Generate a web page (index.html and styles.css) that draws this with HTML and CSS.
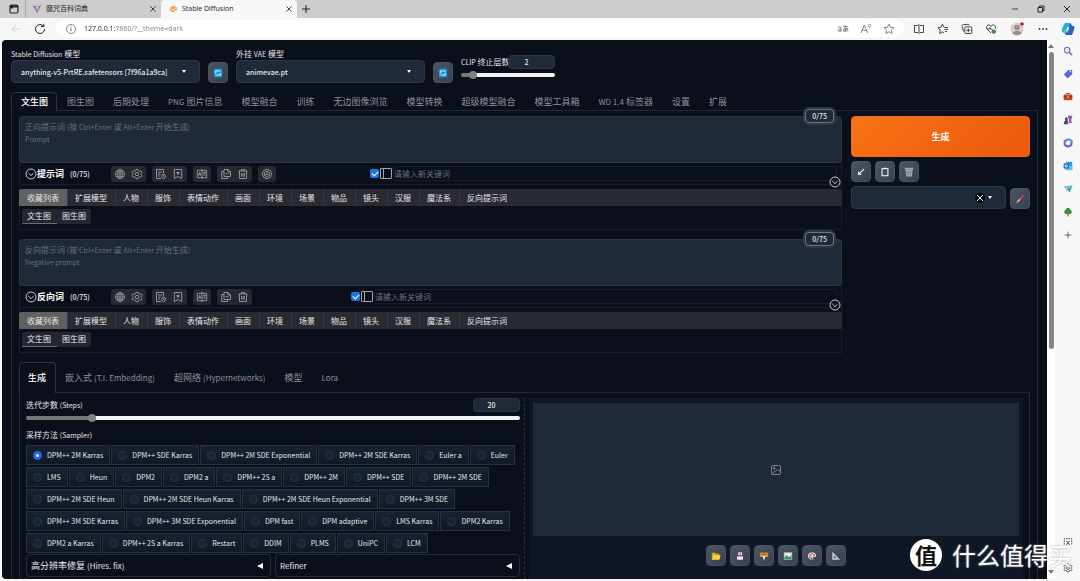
FILE: index.html
```html
<!DOCTYPE html>
<html lang="zh-CN">
<head>
<meta charset="utf-8">
<title>Stable Diffusion</title>
<link rel="stylesheet" href="styles.css">
</head>
<body>
<svg class="defs" aria-hidden="true">
  <symbol id="refresh" viewBox="0 0 12 12"><rect x="1" y="1" width="10" height="10" rx="1" fill="#1c9be0"/><path d="M3.2 5.6V3.4h4.2a1.3 1.3 0 0 1 1.3 1.3M2.2 4.6l1 1 1-1M8.8 6.4v2.2H4.600a1.300 1.300 0 0 1-1.300-1.300M9.800 7.400l-1-1-1 1" fill="none" stroke="#e8f6ff" stroke-width="1"/></symbol>
  <symbol id="chev" viewBox="0 0 12 12"><circle cx="6" cy="6" r="5" fill="none" stroke="#c8cacf" stroke-width="1"/><path d="M3.300 5l2.700 2.600L8.700 5" fill="none" stroke="#c8cacf" stroke-width="1"/></symbol>
  <symbol id="globe" viewBox="0 0 12 12"><g fill="none" stroke="currentColor" stroke-width=".8"><circle cx="6" cy="6" r="4.500"/><ellipse cx="6" cy="6" rx="2.200" ry="4.500"/><path d="M1.500 6h9M2.200 3.700h7.600M2.200 8.300h7.600M6 1.500v9"/></g></symbol>
  <symbol id="gear" viewBox="0 0 12 12"><g fill="none" stroke="currentColor" stroke-width=".9"><path d="M5 1.300h2l.4 1.300 1.200.6 1.300-.4 1 1.700-.9 1v1l.9 1-1 1.700-1.300-.4-1.200.6-.4 1.300H5l-.4-1.300-1.200-.6-1.300.4-1-1.700.9-1v-1l-.9-1 1-1.700 1.300.4 1.200-.6z"/><circle cx="6" cy="6" r="1.700"/></g></symbol>
  <symbol id="history" viewBox="0 0 12 12"><g fill="none" stroke="currentColor" stroke-width=".9"><path d="M6 10.500H1.500v-9h7v4M3 4h4M3 6h2.500M3 8h2"/><circle cx="8.600" cy="8.400" r="2.100"/><path d="M8.600 7.200v1.300h1"/></g></symbol>
  <symbol id="bookmark" viewBox="0 0 12 12"><g fill="none" stroke="currentColor" stroke-width=".9"><path d="M2.300 1.500h7.400v9L6 8.500l-3.700 2z"/></g><path d="M6 2.900l.6 1.300 1.400.2-1 1 .2 1.400L6 6.100l-1.200.7L5 5.400l-1-1 1.400-.2z" fill="currentColor"/></symbol>
  <symbol id="translate" viewBox="0 0 12 12"><g fill="none" stroke="currentColor" stroke-width=".9"><path d="M1.300 2.300h9.400v7.400H1.300zM6 1v10M2.600 7.700l1.100-3.500 1.100 3.500M3 6.600h1.500M7.200 4.500h2.600M8.500 3.700v.8M7.400 7.800l2-3M7.600 5.800l2 2"/></g></symbol>
  <symbol id="copy" viewBox="0 0 12 12"><g fill="none" stroke="currentColor" stroke-width=".9"><path d="M4 1.500h4l2.500 2.200v4.800H4zM7.800 1.500v2.400h2.500M4 3.500H1.700v7h6v-2M5.500 5.700h3.300"/></g></symbol>
  <symbol id="trash" viewBox="0 0 12 12"><path d="M1.500 3h9M4.300 3V1.500h3.400V3M2.500 3v7.500h7V3M4.700 5v3.700M6 5v3.700M7.300 5v3.700" fill="none" stroke="currentColor" stroke-width=".9"/></symbol>
  <symbol id="ai" viewBox="0 0 12 12"><g fill="none" stroke="currentColor" stroke-width=".9"><path d="M6 1.200l3.400 1.400L10.800 6 9.400 9.400 6 10.800 2.600 9.400 1.200 6l1.400-3.400z"/><path d="M6 3l2.600 1.500v3L6 9 3.400 7.500v-3zM6 3v3l2.600 1.500M6 6L3.400 7.500"/></g></symbol>
  <symbol id="cross" viewBox="0 0 12 12"><path d="M3 3l6 6M9 3L3 9" fill="none" stroke="currentColor" stroke-width="1"/></symbol>
</svg>

<div class="browser">
  <header class="tabstrip">
    <button class="chromebtn tabmenu" aria-label="标签页菜单"><svg viewBox="0 0 12 12"><rect x="2" y="2" width="8" height="8" rx="1.500" fill="none" stroke="#222" stroke-width="1.200"/><path d="M2 3.500h8M4 2v3.500" stroke="#222" stroke-width="1.800"/></svg></button>
    <div class="btab">
      <svg viewBox="0 0 12 12"><path d="M.8 1.500l5.200 9.500 5.200-9.500L6 3z" fill="#7a6df0"/><path d="M6.500 .8L4 5.500h2L5.500 9.500 8.500 4H7z" fill="#f6c52c"/></svg>
      <span>魔咒百科词典</span>
      <button class="chromebtn" aria-label="关闭"><svg viewBox="0 0 12 12"><use href="#cross"/></svg></button>
    </div>
    <div class="btab current">
      <svg viewBox="0 0 12 12"><path d="M2 4.500L6.500 2 10.500 4v4L5.500 10 2 8z" fill="#f6a04c"/><path d="M2 5l4 2 4-2.500M3 8l3-1 4 1" fill="none" stroke="#fbdcb8" stroke-width="1"/></svg>
      <span>Stable Diffusion</span>
      <button class="chromebtn" aria-label="关闭"><svg viewBox="0 0 12 12"><use href="#cross"/></svg></button>
    </div>
    <button class="chromebtn" aria-label="新建标签页"><svg viewBox="0 0 12 12"><path d="M6 2v8M2 6h8" stroke="#222" stroke-width="1"/></svg></button>
    <div class="winctl">
      <button class="chromebtn" aria-label="最小化"><svg viewBox="0 0 12 12"><path d="M3 6h6" stroke="#444"/></svg></button>
      <button class="chromebtn" aria-label="还原"><svg viewBox="0 0 12 12"><path d="M3 4.500h4.500V9H3zM4.500 4.500V3H9v4.500H7.500" fill="none" stroke="#222"/></svg></button>
      <button class="chromebtn" aria-label="关闭窗口"><svg viewBox="0 0 12 12"><use href="#cross"/></svg></button>
    </div>
  </header>

  <nav class="toolbar">
    <button class="chromebtn" aria-label="后退"><svg viewBox="0 0 12 12"><path d="M10 6H2M5.500 2.500L2 6l3.500 3.500" fill="none" stroke="#d0d0d0"/></svg></button>
    <button class="chromebtn" aria-label="刷新"><svg viewBox="0 0 12 12"><path d="M10.500 6A4.500 4.500 0 1 1 9 2.700M9.800.8v2.700H7" fill="none" stroke="#222" stroke-width="1"/></svg></button>
    <div class="address">
      <svg viewBox="0 0 12 12"><circle cx="6" cy="6" r="4.500" fill="none" stroke="#777" stroke-width=".9"/><path d="M6 5.200v3M6 3.300v1" stroke="#777"/></svg>
      <input type="text" class="url" aria-label="地址" value="127.0.0.1:7860/?__theme=dark">
      <button class="chromebtn" aria-label="翻译"><svg viewBox="0 0 12 12" fill="none" stroke="#777" stroke-width=".9"><path d="M1 4.500q2-1.500 3 0v4M4 6.200q-3-.4-3 1.200t3 .6M6 3.600h5M8 2.500q-.5 4 .8 6M10 5q-1 4-3.300 3.500Q5.300 6 9 5.400 11.500 5.600 10.800 7.500 10 8.700 9.500 8.500"/></svg></button>
      <button class="chromebtn" aria-label="朗读"><svg viewBox="0 0 12 12" fill="none" stroke="#777" stroke-width=".9"><path d="M1 10l3.300-8 3.300 8M2.200 7.300h4.200M8 1.500q1 1 0 2.300M9.500.8q1.700 1.800 0 4"/></svg></button>
      <button class="chromebtn" aria-label="收藏"><svg viewBox="0 0 12 12"><path d="M6 1.200l1.500 3.100 3.400.4-2.500 2.400.6 3.400-3-1.700-3 1.700.6-3.400L1.100 4.700l3.400-.4z" fill="none" stroke="#777" stroke-width=".9"/></svg></button>
    </div>
    <div class="tools">
      <button class="chromebtn" aria-label="分屏"><svg viewBox="0 0 12 12" fill="none" stroke="#333" stroke-width=".9"><path d="M5 2.500H1.500v7H5M7 2.500h3.500v7H7M6 1v10"/></svg></button>
      <button class="chromebtn" aria-label="收藏夹"><svg viewBox="0 0 12 12" fill="none" stroke="#333" stroke-width=".9"><path d="M7 4.300L5.500 1.200 4 4.300l-3 .4 2.300 2.400-.6 3.400 2.800-1.600L7 9.700M7.500 4.500H11M7.500 6.500H11M8 8.500h2"/></svg></button>
      <button class="chromebtn" aria-label="集锦"><svg viewBox="0 0 12 12" fill="none" stroke="#333" stroke-width=".9"><rect x="3.800" y="3.800" width="7" height="6.700" rx="1"/><path d="M2.500 8.500L1.200 3.300Q1 2 2.300 1.700L7 1.300q1 0 1.200 1.200M7.300 5.300v4M5.300 7.200h4"/></svg></button>
      <button class="chromebtn" aria-label="性能"><svg viewBox="0 0 12 12" fill="none" stroke="#333" stroke-width=".9"><path d="M6 10L1.700 5.700Q.6 3 3 2q2-.4 3 1.300Q7 1.600 9 2q2.400 1 1.300 3.700M2 6h2l1-1.500L6.500 7l1-1"/><circle cx="8.800" cy="8.600" r="2.200" fill="#3e8e3c" stroke="none"/></svg></button>
      <button class="chromebtn avatar profile" aria-label="个人资料"><svg viewBox="0 0 14 14"><circle cx="7" cy="7" r="6.500" fill="#d5cec9"/><circle cx="7" cy="5.500" r="2.700" fill="#968f8b"/><path d="M2.500 11.500q0-2.500 4.500-2.500t4.500 2.500Q7 15 2.500 11.500z" fill="#968f8b"/><circle cx="12" cy="2" r="1.800" fill="#c4152b"/></svg></button>
      <button class="chromebtn" aria-label="更多"><svg viewBox="0 0 12 12"><g fill="#333"><circle cx="2.500" cy="6" r=".9"/><circle cx="6" cy="6" r=".9"/><circle cx="9.500" cy="6" r=".9"/></g></svg></button>
      <button class="chromebtn avatar" aria-label="Copilot"><svg viewBox="0 0 14 14"><path d="M4 1h5l2 3-3 1-2 6H3Q0 10 1 6.500z" fill="#23a9dc"/><path d="M9 1l2.500 3H13q1 1 0 3.500L11 13H5l-1.500-2H6l2-6z" fill="#2562cf"/><path d="M3 11l3-1 1-3-3 1-1.500 1z" fill="#6cd35c"/><path d="M6.500 5h1.800L7 9H5.200z" fill="#f7f7f7"/></svg></button>
    </div>
  </nav>

  <div class="content">
    <main class="page">
      <section class="quick">
        <div class="field">
          <label for="ckpt"><small>Stable Diffusion</small> 模型</label>
          <div class="selectwrap"><select id="ckpt"><option>anything-v5-PrtRE.safetensors [7f96a1a9ca]</option></select></div>
        </div>
        <button class="tool" aria-label="刷新模型"><svg viewBox="0 0 12 12"><use href="#refresh"/></svg></button>
        <div class="field">
          <label for="vae">外挂 <small>VAE</small> 模型</label>
          <div class="selectwrap"><select id="vae"><option>animevae.pt</option></select></div>
        </div>
        <button class="tool" aria-label="刷新 VAE"><svg viewBox="0 0 12 12"><use href="#refresh"/></svg></button>
        <div class="clip">
          <div class="sliderhead"><label for="clip"><small>CLIP</small> 终止层数</label><input class="num" type="text" value="2" aria-label="CLIP 终止层数数值"></div>
          <input id="clip" class="slider" type="range" min="1" max="12" value="2">
        </div>
      </section>

      <nav class="tabs">
        <button class="tab on">文生图</button><button class="tab">图生图</button><button class="tab">后期处理</button><button class="tab"><small>PNG</small> 图片信息</button><button class="tab">模型融合</button><button class="tab">训练</button><button class="tab">无边图像浏览</button><button class="tab">模型转换</button><button class="tab">超级模型融合</button><button class="tab">模型工具箱</button><button class="tab"><small>WD 1.4</small> 标签器</button><button class="tab">设置</button><button class="tab">扩展</button>
      </nav>

      <section class="panel">
        <div class="top">
          <div class="prompts">
            <div class="prompt">
              <textarea id="pos" placeholder=" "></textarea>
              <label class="hint" for="pos">正向提示词 <small>(</small>按 <small>Ctrl+Enter</small> 或 <small>Alt+Enter</small> 开始生成<small>)<br>Prompt</small></label>
              <span class="counter">0/75</span>
              <div class="ptools">
                <svg class="fold" viewBox="0 0 12 12"><use href="#chev"/></svg><strong>提示词</strong><span class="count">(0/75)</span>
                <div class="groups">
                  <div class="group"><button aria-label="语言"><svg><use href="#globe"/></svg></button><button aria-label="设置"><svg><use href="#gear"/></svg></button></div>
                  <div class="group"><button aria-label="历史"><svg><use href="#history"/></svg></button><button aria-label="收藏"><svg><use href="#bookmark"/></svg></button></div>
                  <div class="group"><button aria-label="翻译"><svg><use href="#translate"/></svg></button></div>
                  <div class="group"><button aria-label="复制"><svg><use href="#copy"/></svg></button><button aria-label="清空"><svg><use href="#trash"/></svg></button></div>
                  <div class="group"><button aria-label="AI"><svg><use href="#ai"/></svg></button></div>
                </div>
                <div class="keyword"><input type="checkbox" checked aria-label="启用关键词"><i class="pane"></i><input type="text" placeholder="请输入新关键词" aria-label="新关键词"></div>
              </div>
              <svg class="unfold" viewBox="0 0 12 12"><use href="#chev"/></svg>
              <div class="cats"><button class="on">收藏列表</button><button>扩展模型</button><button>人物</button><button>服饰</button><button>表情动作</button><button>画面</button><button>环境</button><button>场景</button><button>物品</button><button>镜头</button><button>汉服</button><button>魔法系</button><button>反向提示词</button></div>
              <div class="subs"><button class="on">文生图</button><button>图生图</button></div>
            </div>
            <div class="prompt">
              <textarea id="neg" placeholder=" "></textarea>
              <label class="hint" for="neg">反向提示词 <small>(</small>按 <small>Ctrl+Enter</small> 或 <small>Alt+Enter</small> 开始生成<small>)<br>Negative prompt</small></label>
              <span class="counter">0/75</span>
              <div class="ptools">
                <svg class="fold" viewBox="0 0 12 12"><use href="#chev"/></svg><strong>反向词</strong><span class="count">(0/75)</span>
                <div class="groups">
                  <div class="group"><button aria-label="语言"><svg><use href="#globe"/></svg></button><button aria-label="设置"><svg><use href="#gear"/></svg></button></div>
                  <div class="group"><button aria-label="历史"><svg><use href="#history"/></svg></button><button aria-label="收藏"><svg><use href="#bookmark"/></svg></button></div>
                  <div class="group"><button aria-label="翻译"><svg><use href="#translate"/></svg></button></div>
                  <div class="group"><button aria-label="复制"><svg><use href="#copy"/></svg></button><button aria-label="清空"><svg><use href="#trash"/></svg></button></div>
                </div>
                <div class="keyword wide"><input type="checkbox" checked aria-label="启用关键词"><i class="pane"></i><input type="text" placeholder="请输入新关键词" aria-label="新关键词"></div>
              </div>
              <svg class="unfold" viewBox="0 0 12 12"><use href="#chev"/></svg>
              <div class="cats"><button class="on">收藏列表</button><button>扩展模型</button><button>人物</button><button>服饰</button><button>表情动作</button><button>画面</button><button>环境</button><button>场景</button><button>物品</button><button>镜头</button><button>汉服</button><button>魔法系</button><button>反向提示词</button></div>
              <div class="subs"><button class="on">文生图</button><button>图生图</button></div>
            </div>
          </div>

          <aside class="actions">
            <button class="generate">生成</button>
            <div class="toolrow">
              <button class="tool" aria-label="读取参数"><svg viewBox="0 0 12 12"><path d="M9.500 2.500L4 8" fill="none" stroke="#fff" stroke-width="1.300"/><path d="M2.500 5v4.500H7z" fill="#fff"/></svg></button>
              <button class="tool" aria-label="粘贴"><svg viewBox="0 0 12 12"><rect x="2.500" y="2" width="7" height="8.500" fill="none" stroke="#fff" stroke-width="1.200"/><path d="M4.500 1.500h3" stroke="#fff" stroke-width="1.500"/></svg></button>
              <button class="tool" aria-label="清除提示词"><svg viewBox="0 0 12 12"><path d="M1 1h10v2h-.7L9.500 11.500h-7L1.700 3H1z" fill="#a5a8ad"/><path d="M1.500 3h9M4 4.500l.5 5.500M6 4.500V10M8 4.500L7.500 10M3 6.500h6" stroke="#70757d" stroke-width=".6"/></svg></button>
            </div>
            <div class="stylerow">
              <div class="selectwrap styles"><select aria-label="预设样式"><option></option></select><button class="clear" aria-label="清除"><svg viewBox="0 0 12 12"><use href="#cross"/></svg></button></div>
              <button class="tool" aria-label="编辑样式"><svg viewBox="0 0 12 12"><path d="M10.800 1.200L5 6l1 1.200z" fill="#e2395b" stroke="#e2395b" stroke-width="1.200"/><path d="M5 5.800l1.500 1.500-1 1-1.500-1.500z" fill="#c9ccd1"/><path d="M4.300 6.800l1.200 1.200Q4.500 10.800 1.200 10.500 2.500 9.700 2.600 8.500q.5-1.600 1.700-1.700z" fill="#f3b04b"/></svg></button>
            </div>
          </aside>
        </div>

        <nav class="tabs sub">
          <button class="tab on">生成</button><button class="tab">嵌入式 <small>(T.I. Embedding)</small></button><button class="tab">超网络 <small>(Hypernetworks)</small></button><button class="tab">模型</button><button class="tab"><small>Lora</small></button>
        </nav>
        <div class="panel lower">
          <section class="settings">
            <div class="sliderhead"><label for="steps">迭代步数 <small>(Steps)</small></label><input class="num" type="text" value="20" aria-label="迭代步数数值"></div>
            <input id="steps" class="slider" type="range" min="1" max="150" value="20">
            <fieldset class="samplers">
              <legend>采样方法 <small>(Sampler)</small></legend>
              <div class="row"><label><input type="radio" name="s" checked>DPM++ 2M Karras</label><label><input type="radio" name="s">DPM++ SDE Karras</label><label><input type="radio" name="s">DPM++ 2M SDE Exponential</label><label><input type="radio" name="s">DPM++ 2M SDE Karras</label><label><input type="radio" name="s">Euler a</label><label><input type="radio" name="s">Euler</label></div>
              <div class="row"><label><input type="radio" name="s">LMS</label><label><input type="radio" name="s">Heun</label><label><input type="radio" name="s">DPM2</label><label><input type="radio" name="s">DPM2 a</label><label><input type="radio" name="s">DPM++ 2S a</label><label><input type="radio" name="s">DPM++ 2M</label><label><input type="radio" name="s">DPM++ SDE</label><label><input type="radio" name="s">DPM++ 2M SDE</label></div>
              <div class="row"><label><input type="radio" name="s">DPM++ 2M SDE Heun</label><label><input type="radio" name="s">DPM++ 2M SDE Heun Karras</label><label><input type="radio" name="s">DPM++ 2M SDE Heun Exponential</label><label><input type="radio" name="s">DPM++ 3M SDE</label></div>
              <div class="row"><label><input type="radio" name="s">DPM++ 3M SDE Karras</label><label><input type="radio" name="s">DPM++ 3M SDE Exponential</label><label><input type="radio" name="s">DPM fast</label><label><input type="radio" name="s">DPM adaptive</label><label><input type="radio" name="s">LMS Karras</label><label><input type="radio" name="s">DPM2 Karras</label></div>
              <div class="row"><label><input type="radio" name="s">DPM2 a Karras</label><label><input type="radio" name="s">DPM++ 2S a Karras</label><label><input type="radio" name="s">Restart</label><label><input type="radio" name="s">DDIM</label><label><input type="radio" name="s">PLMS</label><label><input type="radio" name="s">UniPC</label><label><input type="radio" name="s">LCM</label></div>
            </fieldset>
            <div class="accordions">
              <button><span>高分辨率修复 <small>(Hires. fix)</small></span><i></i></button>
              <button><small>Refiner</small><i></i></button>
            </div>
          </section>
          <section class="result">
            <div class="preview"><svg viewBox="0 0 12 12" fill="none" stroke="#858c97" stroke-width=".9"><rect x="1.500" y="1.500" width="9" height="9" rx="1"/><circle cx="4.200" cy="4.200" r=".9"/><path d="M2 10l5.500-4.500 3 2.500"/></svg></div>
            <div class="toolrow">
              <button class="tool" aria-label="打开目录"><svg viewBox="0 0 12 12"><path d="M1 2h4l1 1.200h4V10H1z" fill="#d9a21c"/><path d="M3 5h8.500L10 10.500H1z" fill="#fdd044"/></svg></button>
              <button class="tool" aria-label="保存"><svg viewBox="0 0 12 12"><path d="M1.500 1.500h8l1 1v8h-9z" fill="#5a4170"/><path d="M4 1.500h4.500V5H4z" fill="#e6e6ee"/><path d="M2.500 6.500h7v4h-7z" fill="#f2eef5"/><path d="M6.500 2v2.300" stroke="#5a4170"/></svg></button>
              <button class="tool" aria-label="打包保存"><svg viewBox="0 0 12 12"><path d="M1 2h10v5H1z" fill="#eaa13a"/><path d="M1 4h10M6 2v3" stroke="#8c5527"/><path d="M6 6v4" stroke="#dcd9ee" stroke-width="2.400"/><path d="M4.800 9.500h2.400V11H4.800z" fill="#7662ca"/></svg></button>
              <button class="tool" aria-label="发送到图生图"><svg viewBox="0 0 12 12"><path d="M1 1.500h10v9H1z" fill="#c9b98e"/><path d="M2 2.500h8v7H2z" fill="#d6f0e4"/><path d="M2 9.500V7l2.500-2L7 7.500 10 5v4.500z" fill="#279b69"/><path d="M2 8.500h8v1H2z" fill="#2887b6"/></svg></button>
              <button class="tool" aria-label="发送到局部重绘"><svg viewBox="0 0 12 12"><path d="M6 1.500c3 0 5 1.700 5 4 0 1.800-1.500 2-2.600 1.700C7 7 7.500 8.300 7.500 9c0 1-1 1.600-2.500 1.400C2.500 10 1 8 1 5.800 1 3.200 3 1.500 6 1.500z" fill="#e8c6c3"/><g fill="#d63c4c"><circle cx="3.500" cy="4.500" r="1"/><circle cx="8.500" cy="5" r="1"/></g><circle cx="6" cy="3.300" r="1" fill="#3f7ac4"/><circle cx="3.500" cy="7.300" r="1" fill="#3b8a4b"/><circle cx="5.500" cy="8.600" r=".8" fill="#2a2f3a"/></svg></button>
              <button class="tool" aria-label="发送到后期处理"><svg viewBox="0 0 12 12"><path d="M1.500 1v9.500H11zM3.500 5.800l2.700 2.700H3.500z" fill="#c6cad0" fill-rule="evenodd"/></svg></button>
            </div>
          </section>
        </div>
      </section>
    </main>
    <div class="scrollbar"><i class="up"></i><i class="thumb"></i><i class="down"></i></div>
    <aside class="sidebar">
      <button class="chromebtn" aria-label="搜索"><svg viewBox="0 0 12 12"><path d="M7.500 7.500l3.500 3.500" stroke="#b14fd8" stroke-width="2"/><circle cx="5" cy="5" r="3.500" fill="#dcebf5" stroke="#59636d" stroke-width="1.200"/></svg></button>
      <button class="chromebtn" aria-label="购物"><svg viewBox="0 0 12 12"><path d="M6 1.500L11 1v5L5.500 11 1 6.500z" fill="#4d6de0"/><path d="M3.500 8.700L9 3l2 3-5.500 5z" fill="#6d58d3"/><circle cx="9" cy="3" r=".8" fill="#fff"/></svg></button>
      <button class="chromebtn" aria-label="工具"><svg viewBox="0 0 12 12"><path d="M4 3V1.800h4V3" fill="none" stroke="#7b3524"/><rect x=".8" y="3" width="10.400" height="7" rx="1" fill="#c84a24"/><path d="M.8 5.700h10.400" stroke="#7d2d1d"/><path d="M5 5h2v2H5z" fill="#f5c75a"/></svg></button>
      <button class="chromebtn" aria-label="游戏"><svg viewBox="0 0 12 12"><circle cx="4" cy="4.500" r="1.800" fill="#4b4b50"/><path d="M2.700 6h2.600l1 3.500v1.500H1V9.500z" fill="#4b4b50"/><path d="M6 1h5v2.500l-1 1V8l1 1.500H7V4.500l-1-1z" fill="#a54fd4"/></svg></button>
      <button class="chromebtn" aria-label="Microsoft 365"><svg viewBox="0 0 12 12"><path d="M6 1l4.500 2.500V6" fill="none" stroke="#45a3e8" stroke-width="2.400"/><path d="M10 5.500v3L6 10.500 3 9" fill="none" stroke="#5366d9" stroke-width="2.400"/><path d="M4 9.500L2 8V4l4-2.500" fill="none" stroke="#8a58d2" stroke-width="2.400"/></svg></button>
      <button class="chromebtn" aria-label="Outlook"><svg viewBox="0 0 12 12"><rect x="3.500" y="1" width="7.500" height="6" fill="#2e9de6"/><path d="M3 6h8.500v5H3z" fill="#53c6f2"/><rect x=".8" y="3" width="6" height="6" rx=".7" fill="#0964b8"/><circle cx="3.800" cy="6" r="1.500" fill="none" stroke="#fff"/></svg></button>
      <button class="chromebtn" aria-label="Drop"><svg viewBox="0 0 12 12"><path d="M.5 3L11.500 1.500 5 7z" fill="#62c4de"/><path d="M11.500 1.500L8 10 5 7z" fill="#2c9dbb"/><path d="M3 5.500L5 7l-.5 3.500z" fill="#e9b34a"/></svg></button>
      <button class="chromebtn" aria-label="树"><svg viewBox="0 0 12 12"><path d="M5 7h2v4.500H5z" fill="#d28a2e"/><path d="M6 .8q2.500.2 3 2.700 2 1 1.500 3Q9.500 9 6 8.500 2.500 9 1.500 6.500 1 4.500 3 3.500 3.500 1 6 .8z" fill="#2e9434"/></svg></button>
      <button class="chromebtn" aria-label="添加"><svg viewBox="0 0 12 12"><path d="M6 2v8M2 6h8" stroke="#555" stroke-width="1"/></svg></button>
      <div class="bottom">
        <button class="chromebtn" aria-label="截图"><svg viewBox="0 0 12 12" fill="none" stroke="#333"><path d="M1.500 9V2h9v7" stroke-dasharray="2 1"/><path d="M4 4.500l4 5M8 4.500l-4 5"/></svg></button>
        <button class="chromebtn" aria-label="设置"><svg viewBox="0 0 12 12" color="#333"><use href="#gear"/></svg></button>
      </div>
    </aside>
    <div class="watermark"><b>值</b><span>什么值得买</span></div>
  </div>
</div>
</body>
</html>
```

FILE: styles.css
```css
* { box-sizing: border-box; }
body, button, input, select, textarea { font-family: "Noto Sans CJK SC", "Noto Sans", sans-serif; font-size: 8px; line-height: 12px; }
body { margin: 0; color: #e5e7eb; background: #f7f7f7; }
button { margin: 0; padding: 0; border: 0; background: none; color: inherit; white-space: nowrap; }
input, select, textarea { margin: 0; color: inherit; }
small { font-size: 7px; }
svg { display: block; flex: none; width: 12px; height: 12px; }
.defs { position: absolute; width: 0; height: 0; }
fieldset { margin: 0; padding: 0; border: 0; min-width: 0; }

/* Browser frame */
.browser { display: flex; flex-direction: column; height: 100vh; overflow: hidden; color: #222; }
.chromebtn { display: flex; align-items: center; justify-content: center; width: 12px; height: 12px; flex: none; }
.tabstrip { display: flex; align-items: center; flex: none; height: 18px; padding: 0 7px 0 8px; background: #cdcdcd; }
.tabmenu { margin-right: 5px; }
.btab { display: flex; align-items: center; gap: 4px; width: 136px; height: 18px; padding: 0 2px 0 6px; border-left: 1px solid #a5a5a5; font-family: "Open Sans", "Noto Sans CJK SC", sans-serif; font-size: 7px; }
.btab span { flex: 1; white-space: nowrap; }
.btab svg { width: 10px; height: 10px; }
.btab.current { background: #f7f7f7; border-color: #f7f7f7; border-radius: 4px 4px 0 0; margin-right: 3px; }
.winctl { display: flex; gap: 14px; margin-left: auto; }
.toolbar { display: flex; align-items: center; flex: none; height: 21px; padding: 0 5px 0 10px; background: #f7f7f7; }
.toolbar > .chromebtn { margin-right: 12px; }
.address { display: flex; align-items: center; gap: 11px; flex: 1; height: 17px; margin-left: -2px; padding: 0 9px; border-radius: 9px; background: #fff; }
.url { flex: 1; min-width: 0; padding: 0; margin-left: -4px; border: 0; outline: 0; font-family: "Open Sans", sans-serif; font-size: 7px; color: transparent; background: linear-gradient(90deg, #222 32px, #777 32px); background-clip: text; -webkit-background-clip: text; }
.tools { display: flex; align-items: center; gap: 12px; margin-left: 9px; }
.avatar, .avatar svg { width: 14px; height: 14px; }
.profile { margin: 0 1px; }
.content { position: relative; display: flex; flex: 1; min-height: 0; padding: 1px 0 2px 2px; }
.scrollbar { display: flex; flex-direction: column; align-items: center; width: 8px; padding: 4px 0 5px; background: #fff; }
.scrollbar .up { border: 3px solid transparent; border-top: 0; border-bottom: 4px solid #777; }
.scrollbar .thumb { width: 5px; height: 56%; margin-top: 4px; border-radius: 3px; background: #858585; }
.scrollbar .down { margin-top: auto; border: 3px solid transparent; border-bottom: 0; border-top: 4px solid #777; }
.sidebar { display: flex; flex-direction: column; align-items: center; gap: 11px; width: 25px; padding-top: 5px; }
.sidebar svg { width: 10px; height: 10px; }
.sidebar .bottom { display: flex; flex-direction: column; gap: 14px; margin-top: auto; padding-bottom: 5px; }

/* Page */
.page { display: flex; flex-direction: column; flex: 1; min-width: 0; overflow: hidden; padding: 8px 9px 0; border-radius: 4px 0 0 4px; background: #0b0f19; color: #e5e7eb; }
.quick { display: flex; align-items: flex-end; gap: 8px; flex: none; }
.field { display: flex; flex-direction: column; width: 189px; }
.field label { height: 12px; white-space: nowrap; }
.selectwrap { position: relative; display: flex; height: 23px; }
.selectwrap select { appearance: none; width: 100%; padding: 0 24px 0 9px; border: 1px solid #2c3644; border-radius: 4px; background: #1f2937; font-size: 7px; font-weight: 500; }
.selectwrap::after { content: ""; position: absolute; right: 14px; top: 10px; border: 2px solid transparent; border-top: 3px solid #fff; border-bottom: 0; }
.tool { display: flex; align-items: center; justify-content: center; flex: none; width: 20px; height: 21px; border: 1px solid #475160; border-radius: 4px; background: linear-gradient(135deg, #4b5563, #374151); }
.tool svg { width: 10px; height: 10px; }
.clip { display: flex; flex-direction: column; gap: 2px; width: 94px; padding-bottom: 4px; }
.sliderhead { display: flex; align-items: center; justify-content: space-between; height: 14px; white-space: nowrap; }
.sliderhead label { flex: 1; min-width: 0; height: 12px; }
.num { flex: none; width: 47px; height: 14px; padding: 0 10px 0 0; border: 1px solid #2c3644; border-radius: 4px; background: #1f2937; text-align: center; font-size: 7px; font-weight: 500; }
.slider { appearance: none; display: block; width: 100%; height: 8px; background: none; }
.slider::-webkit-slider-runnable-track { height: 4px; border-radius: 2px; background: linear-gradient(90deg, #777 13%, #f3f3f3 13%); }
.slider::-webkit-slider-thumb { appearance: none; width: 8px; height: 8px; margin-top: -2px; border-radius: 50%; background: #808080; }

.tabs { display: flex; flex: none; height: 19px; margin: 9px 0 -1px; position: relative; }
.tab { flex: none; padding: 0 8px 0 9px; border: 1px solid transparent; border-bottom: 0; font-size: 9px; color: #8b919c; }
.tab small { font-size: 8px; }
.tab.on { border-color: #2c3340; border-radius: 4px 4px 0 0; background: #0b0f19; color: #fff; font-weight: 500; }
.panel { display: flex; flex-direction: column; flex: 1; min-height: 0; padding: 5px 7px 0; border: 1px solid #222935; border-bottom: 0; }
.top { display: flex; gap: 9px; flex: none; }
.prompts { display: flex; flex-direction: column; gap: 9px; flex: 823; min-width: 0; }
.prompt { position: relative; display: flex; flex-direction: column; border: 1px solid #191f2a; border-top: 0; padding-bottom: 5px; }
.prompt textarea { display: block; height: 47px; margin: 0 -1px; padding: 4px 5px; border: 1px solid #2c3644; border-radius: 4px; background: #1f2937; resize: none; overflow: hidden; }
.hint { position: absolute; top: 5px; left: 5px; color: #68717f; pointer-events: none; }
textarea:not(:placeholder-shown) + .hint { display: none; }
::placeholder { color: #68717f; opacity: 1; }
.counter { position: absolute; top: -7px; right: 7px; padding: 0 6px; border: 1px solid #6a7482; border-radius: 4px; background: #1f2937; box-shadow: 0 0 0 2px #2f3743; font-size: 7px; font-weight: 500; }
.ptools { display: flex; align-items: center; height: 22px; padding: 0 4px 0 5px; border-bottom: 1px solid #191f2a; white-space: nowrap; }
.ptools strong { font-size: 9px; color: #fff; }
.count { flex: none; width: 41px; margin-left: 6px; font-size: 7px; font-weight: 500; }
.groups { display: flex; gap: 6px; }
.group { display: flex; gap: 5px; height: 16px; padding: 0 3px; border-radius: 3px; background: #262931; color: #9b9da2; }
.group button { display: flex; align-items: center; }
.keyword { display: flex; align-items: center; flex: 1; gap: 1px; margin-left: 94px; }
.keyword.wide { margin-left: 99px; }
.keyword input[type=checkbox] { appearance: none; display: flex; justify-content: center; width: 9px; height: 9px; border-radius: 2px; background: #1a73e8; }
.keyword input[type=checkbox]::before { content: ""; width: 3px; height: 5px; margin-top: 1px; border: solid #fff; border-width: 0 1px 1px 0; transform: rotate(45deg); }
.pane { width: 12px; height: 11px; border: 1px solid #a3a5a8; border-radius: 1px; background: linear-gradient(90deg, transparent 2px, #a3a5a8 2px 3px, transparent 3px); }
.keyword input[type=text] { flex: 1; min-width: 0; height: 15px; padding: 0; border: 1px solid #191f2a; border-radius: 2px; background: none; }
.unfold { position: absolute; right: 0; top: 60px; }
.cats { display: flex; height: 17px; margin: 4px -1px 0; background: #2a2b32; border-radius: 3px 0 0 0; overflow: hidden; }
.cats button { padding: 0 8px 0 7px; border-left: 1px solid #373940; }
.cats .on { border-color: #606060; background: #606060; }
.subs { display: flex; align-self: flex-start; height: 15px; margin: 3px 0 0 2px; border-radius: 2px; background: #24272f; }
.subs button { padding: 0 5px; height: 15px; border-bottom: 1px solid transparent; }
.subs .on { padding-right: 6px; border-color: #6b6d72; }

.actions { display: flex; flex-direction: column; gap: 4px; flex: 179; min-width: 0; }
.generate { height: 41px; border: 1px solid #ef6a1a; border-radius: 4px; background: linear-gradient(135deg, #f97316, #ea580c); font-size: 9px; font-weight: 700; color: #fff; }
.toolrow { display: flex; gap: 4px; }
.stylerow { display: flex; align-items: flex-end; gap: 4px; }
.styles { flex: 1; }
.clear { position: absolute; right: 21px; top: 7px; display: flex; align-items: center; justify-content: center; width: 10px; height: 10px; border-radius: 50%; background: #090b10; color: #fff; }

.tabs.sub { height: 31px; margin-top: 9px; }
.sub .tab { padding: 0 9px 0 8px; }
.lower { display: grid; grid-template-columns: minmax(0, 494fr) minmax(0, 494fr); gap: 9px; padding: 5px 6px 0; }
.settings { position: relative; }
.settings::after { content: ""; position: absolute; top: 0; bottom: 0; right: -5px; border-right: 1px dashed #2a303b; }
.settings .slider { margin-top: 2px; }
.samplers { margin-top: 7px; }
.samplers legend { height: 12px; padding: 0; margin-bottom: 2px; }
.row { display: flex; flex-wrap: wrap; gap: 2px 1px; margin-top: 2px; }
.row label { display: flex; align-items: center; gap: 5px; height: 20px; padding: 0 6px; border: 1px solid #263040; background: linear-gradient(#182231, #111926); white-space: nowrap; font-size: 7px; }
.row input { appearance: none; width: 9px; height: 9px; border: 1px solid #2c3541; border-radius: 50%; background: #1b2431; }
.row input:checked { border: 3px solid #2563eb; background: #fff; }
.accordions { display: grid; grid-template-columns: 1fr 1fr; gap: 4px; margin-top: 1px; }
.accordions button { display: flex; align-items: center; justify-content: space-between; height: 23px; padding: 0 7px 0 4px; border: 1px solid #262d39; border-radius: 4px; font-size: 9px; }
.accordions small { font-size: 8px; }
.accordions i { border: 3px solid transparent; border-left: 0; border-right: 6px solid #fff; }
.result { display: flex; flex-direction: column; align-items: center; gap: 9px; padding: 5px 4px 0; background: #0f1726; }
.preview { display: flex; align-items: center; justify-content: center; width: 100%; height: 133px; background: #1f2937; }

.watermark { position: absolute; right: 8px; bottom: 9px; display: flex; align-items: center; gap: 10px; color: #fff; font-size: 24px; line-height: 34px; white-space: nowrap; text-shadow: 0 0 2px #999; }
.watermark b { width: 32px; height: 32px; border-radius: 50%; background: #fff; color: #111; font-size: 22px; line-height: 30px; text-align: center; text-shadow: none; }
```
